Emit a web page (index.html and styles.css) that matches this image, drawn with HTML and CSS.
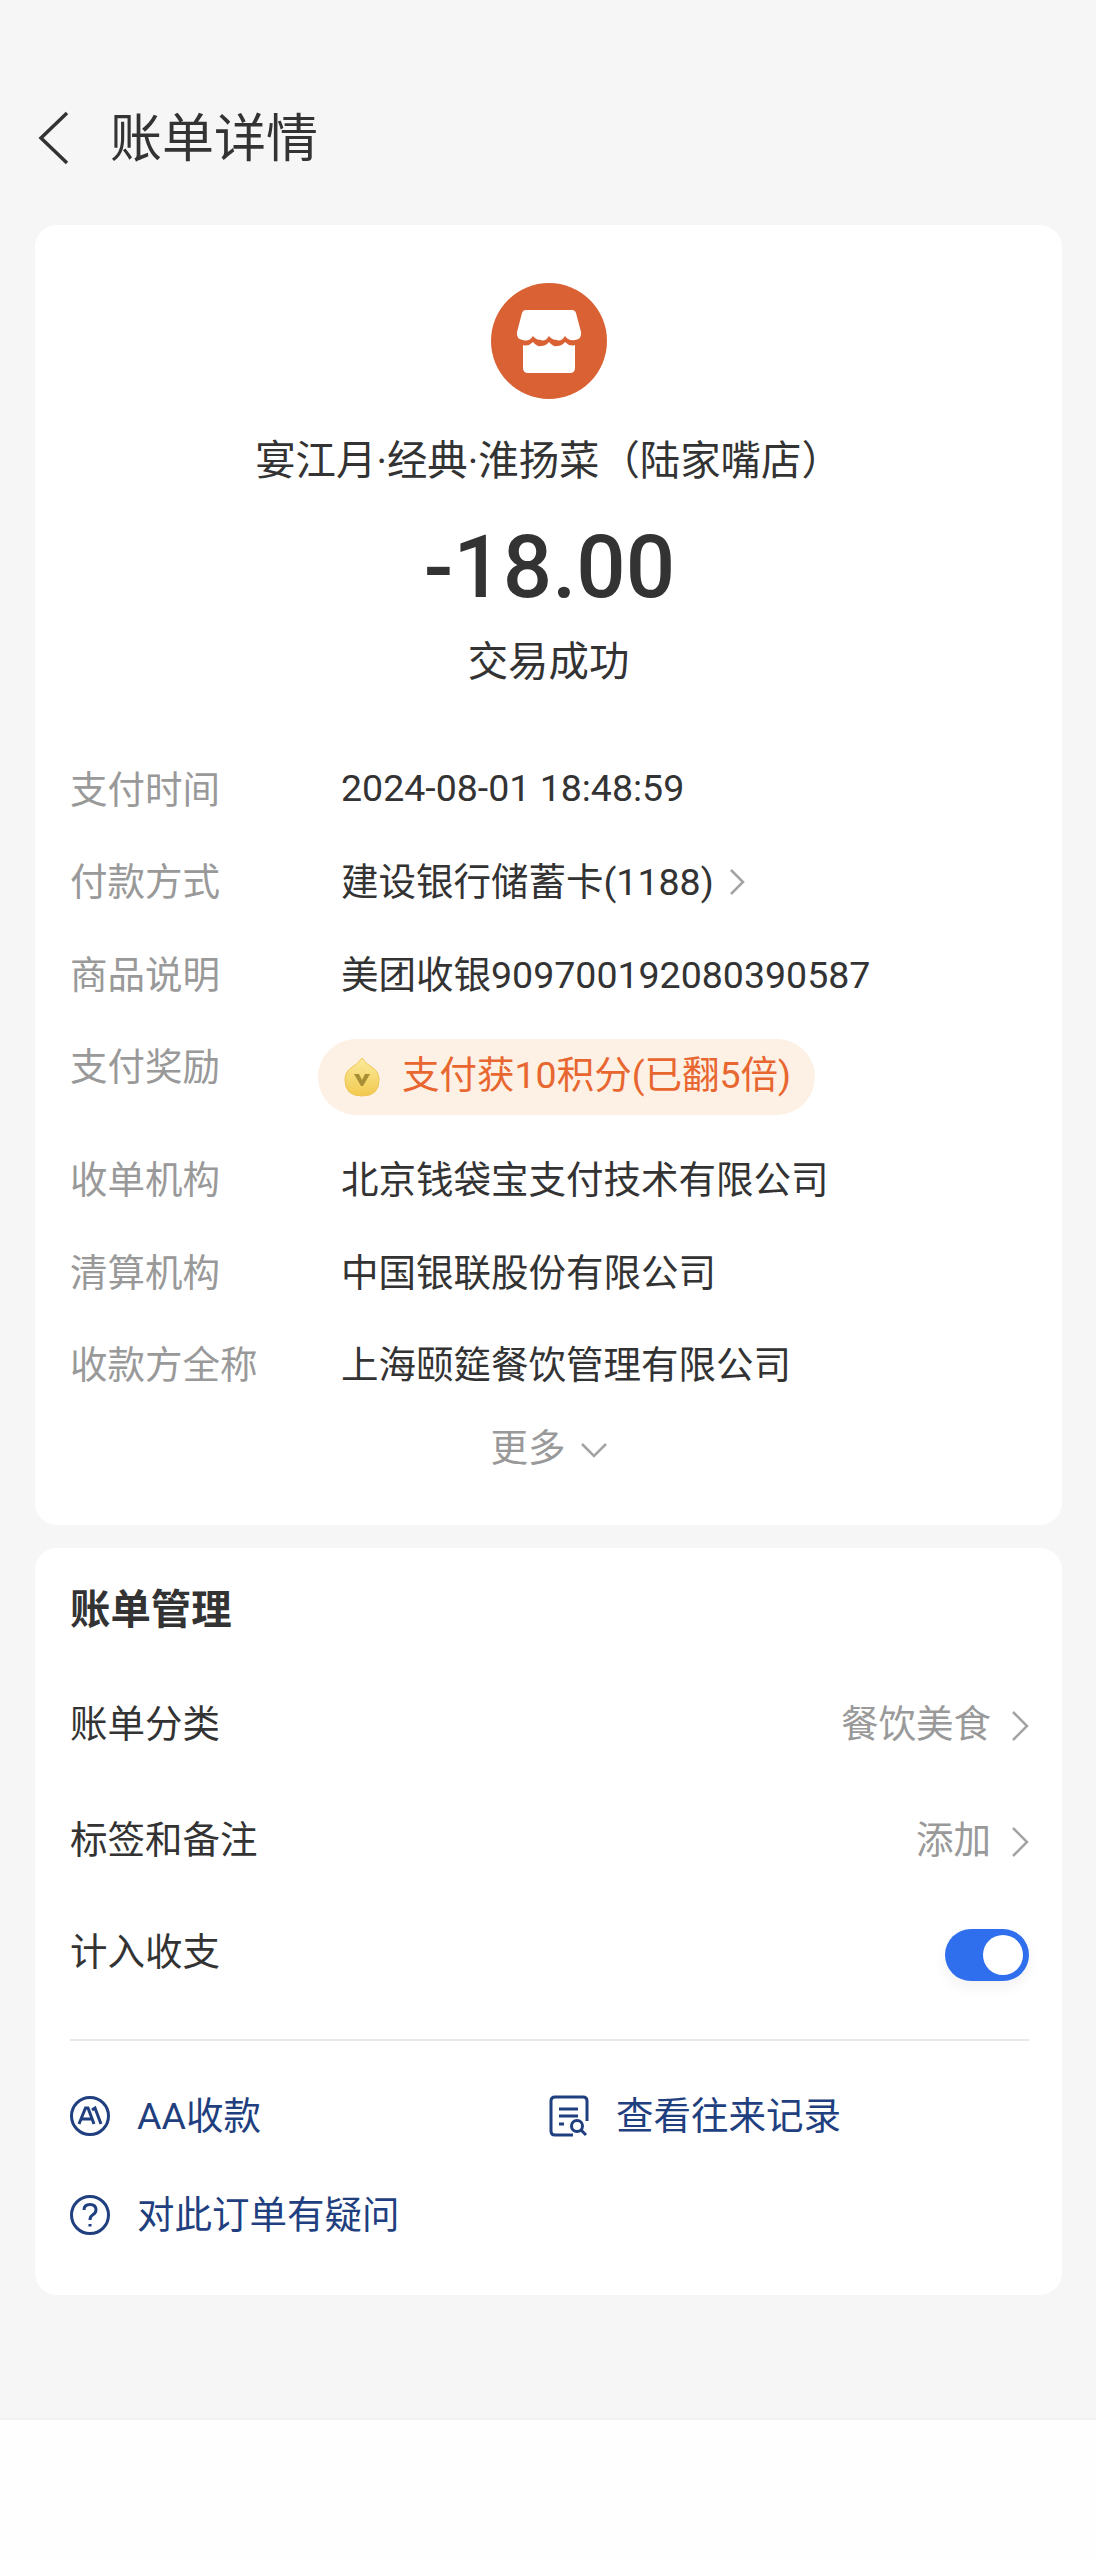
FILE: index.html
```html
<!DOCTYPE html>
<html lang="zh-CN">
<head>
    <meta charset="UTF-8">
    <meta name="viewport" content="width=device-width, initial-scale=1.0">
    <title>账单详情</title>
    <link rel="stylesheet" href="styles.css">
</head>
<body>
    <div class="page">
        <header class="header">
            <svg class="back" width="34" height="54" viewBox="0 0 34 54"><path d="M31 2 L5 27 L31 52" /></svg>
            <h1>账单详情</h1>
        </header>

        <section class="card summary">
            <svg class="shop" width="116" height="116" viewBox="0 0 116 116">
                <circle cx="58" cy="58" r="58" fill="#d96133" />
                <path fill="#fff" d="M35 27 H81 Q84 27 85 30 L90 49 Q91 56 84 57 Q77 58 74 53 Q70 59 66 57 Q61 57 58 53 Q54 59 50 57 Q45 57 42 53 Q38 59 32 57 Q25 56 26 49 L31 30 Q32 27 35 27 Z" />
                <path fill="#fff" d="M32 62 Q37 64 42 59 Q46 64 50 63 Q55 63 58 59 Q62 64 66 63 Q71 63 74 59 Q79 64 84 62 V85 Q84 90 79 90 H37 Q32 90 32 85 Z" />
            </svg>
            <div class="merchant">宴江月·经典·淮扬菜（陆家嘴店）</div>
            <div class="amount">-18.00</div>
            <div class="status">交易成功</div>

            <div class="details">
                <div class="row"><span class="label">支付时间</span><span class="value time">2024-08-01 18:48:59</span></div>
                <div class="row"><span class="label">付款方式</span><span class="value">建设银行储蓄卡(1188)</span>
                    <svg class="chev small" width="18" height="28" viewBox="0 0 18 28"><path d="M3 2 L15 14 L3 26" /></svg>
                </div>
                <div class="row"><span class="label">商品说明</span><span class="value">美团收银909700192080390587</span></div>
                <div class="row reward">
                    <span class="label">支付奖励</span>
                    <div class="badge">
                        <svg class="coin" width="36" height="40" viewBox="0 0 36 40">
                            <defs>
                                <linearGradient id="coinFill" x1="0" y1="0" x2="0" y2="1">
                                    <stop offset="0" stop-color="#fbeb9c" />
                                    <stop offset="1" stop-color="#f2c94e" />
                                </linearGradient>
                            </defs>
                            <path fill="url(#coinFill)" stroke="#efc552" d="M18 1 Q22 7 29 11 Q35 15 35 23 Q35 39 18 39 Q1 39 1 23 Q1 15 7 11 Q14 7 18 1 Z" />
                            <path fill="#a88f35" d="M10 17 H15 L18 23 L21 17 H26 L19 29 H17 Z" />
                        </svg>
                        <span class="badge-text">支付获10积分(已翻5倍)</span>
                    </div>
                </div>
                <div class="row"><span class="label">收单机构</span><span class="value">北京钱袋宝支付技术有限公司</span></div>
                <div class="row"><span class="label">清算机构</span><span class="value">中国银联股份有限公司</span></div>
                <div class="row"><span class="label">收款方全称</span><span class="value">上海颐筵餐饮管理有限公司</span></div>
            </div>

            <div class="more">
                <span>更多</span>
                <svg width="28" height="18" viewBox="0 0 28 18"><path d="M2 3 L14 15 L26 3" /></svg>
            </div>
        </section>

        <section class="card manage">
            <h2>账单管理</h2>
            <div class="line first"><span class="name">账单分类</span><span class="extra">餐饮美食</span>
                <svg class="chev" width="18" height="32" viewBox="0 0 18 32"><path d="M2 2 L16 16 L2 30" /></svg>
            </div>
            <div class="line first"><span class="name">标签和备注</span><span class="extra">添加</span>
                <svg class="chev" width="18" height="32" viewBox="0 0 18 32"><path d="M2 2 L16 16 L2 30" /></svg>
            </div>
            <div class="line last"><span class="name">计入收支</span><span class="toggle"><span class="knob"></span></span></div>
            <div class="divider"></div>
            <div class="links">
                <a class="link">
                    <svg width="40" height="40" viewBox="0 0 40 40"><circle cx="20" cy="20" r="18.5" /><path d="M9 28 L15.5 12 H18 L24 28 M11.5 23 H21 M22 14 L25 12 L31 28" /></svg>
                    <span>AA收款</span>
                </a>
                <a class="link">
                    <svg width="40" height="42" viewBox="0 0 40 42"><path d="M24 40 H6 Q2 40 2 36 V6 Q2 2 6 2 H34 Q38 2 38 6 V26" /><path d="M10 14 H29 M10 21 H29 M10 29 H15" /><circle cx="28" cy="31" r="5.5" /><path d="M32 35 L37 40" /></svg>
                    <span>查看往来记录</span>
                </a>
                <a class="link">
                    <svg width="40" height="40" viewBox="0 0 40 40"><circle cx="20" cy="20" r="18.5" /><path d="M14 15 Q14 9.5 20 9.5 Q26 9.5 26 15 Q26 18 22.5 20 Q20 21.5 20 25" /><path d="M20 29 V31.5" /></svg>
                    <span>对此订单有疑问</span>
                </a>
            </div>
        </section>
    </div>
</body>
</html>
```

FILE: styles.css
```css
* {
    box-sizing: border-box;
}
body {
    margin: 0;
    background-color: #fefefe;
    font-family: Roboto, "Noto Sans CJK SC", sans-serif;
    font-size: 37.5px;
    color: #333;
}
.page {
    height: 2420px;
    padding: 0 34px 0 35px;
    background-color: #f6f6f6;
    border-bottom: 2px solid #f1f1f1;
}
.header {
    display: flex;
    align-items: center;
    height: 225px;
    padding-top: 54px;
}
.header h1 {
    margin: 0 0 0 40px;
    font-size: 52px;
    font-weight: 400;
    line-height: 72px;
}
.back {
    flex: none;
    margin: 0 0 3px 1px;
}
.back path, .chev path, .more path {
    fill: none;
    stroke-width: 2.5;
}
.back path {
    stroke: #333;
    stroke-width: 3.5;
}
.card {
    background: #fff;
    border-radius: 22px;
}
.summary {
    height: 1300px;
    padding-top: 58px;
    text-align: center;
}
.shop {
    display: block;
    margin: 0 auto;
}
.merchant {
    margin-top: 33px;
    font-size: 40.4px;
    line-height: 60px;
}
.amount {
    margin-top: 20px;
    padding-left: 2px;
    font-size: 87px;
    font-weight: 500;
    line-height: 110px;
}
.status {
    margin-top: 11px;
    font-size: 40.4px;
    line-height: 60px;
}
.details {
    margin-top: 47px;
    padding: 0 35px;
    text-align: left;
}
.row {
    display: flex;
    align-items: center;
    height: 92.5px;
}
.label {
    flex: none;
    width: 271px;
    color: #999;
}
.time {
    padding-top: 4px;
}
.row .chev {
    margin: 6px 0 0 14px;
}
.reward {
    align-items: flex-start;
    height: 113px;
}
.reward .label {
    line-height: 98.5px;
}
.badge {
    display: flex;
    align-items: center;
    height: 76px;
    margin: 21px 0 0 -23px;
    padding: 0 24px 0 26px;
    border-radius: 38px;
    background: #fdf0e4;
    color: #e8662f;
}
.badge-text {
    padding-bottom: 10px;
}
.coin {
    flex: none;
    margin-right: 22px;
}
.more {
    display: flex;
    justify-content: center;
    align-items: center;
    gap: 14px;
    height: 60px;
    margin-top: 6px;
    padding-left: 1px;
    color: #999;
}
.more svg {
    margin-top: 12px;
}
.more path {
    stroke: #a3a3a3;
}
.chev path {
    stroke: #a3a3a3;
}
.manage {
    height: 747px;
    margin-top: 23px;
    padding: 33px 33px 0 35px;
}
.manage h2 {
    margin: 0 0 23px;
    font-size: 40.4px;
    font-weight: 700;
    line-height: 60px;
}
.line {
    display: flex;
    align-items: center;
}
.line.first {
    height: 116px;
}
.line.last {
    height: 108px;
    justify-content: space-between;
}
.name {
    padding-bottom: 3px;
}
.extra {
    margin-left: auto;
    padding-bottom: 3px;
    color: #999;
}
.line .chev {
    margin: 7px 0 0 20px;
}
.toggle {
    display: flex;
    justify-content: flex-end;
    align-items: center;
    width: 84px;
    height: 52px;
    margin-top: 10px;
    padding-right: 6px;
    border-radius: 26px;
    background: #2f6fed;
    box-shadow: 0 6px 14px rgba(0, 0, 0, 0.06);
}
.knob {
    width: 40px;
    height: 40px;
    border-radius: 50%;
    background: #fff;
}
.divider {
    height: 2px;
    margin-top: 35px;
    background: #e8e8e8;
}
.links {
    display: grid;
    grid-template-columns: 479px 1fr;
    row-gap: 39px;
    margin-top: 45px;
}
.link {
    display: flex;
    align-items: center;
    gap: 27px;
    height: 60px;
    color: #1f3f7f;
}
.link span {
    padding-bottom: 7px;
}
.link svg {
    flex: none;
    fill: none;
    stroke: #1f3f7f;
    stroke-width: 3;
}
```
